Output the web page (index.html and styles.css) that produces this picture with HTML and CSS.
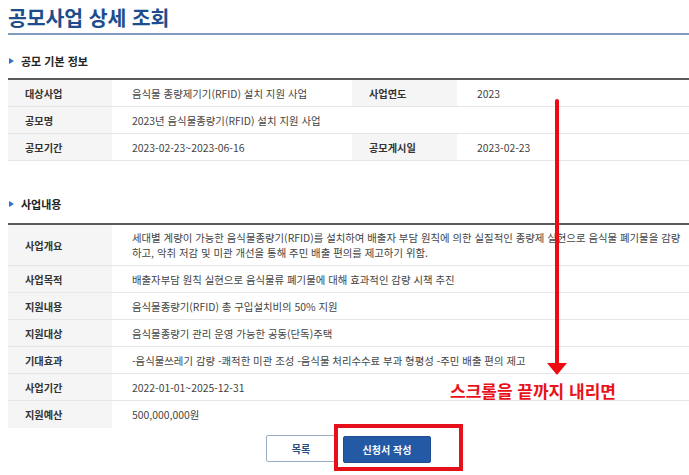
FILE: index.html
```html
<!DOCTYPE html>
<html lang="ko">
<head>
<meta charset="utf-8">
<title>공모사업 상세 조회</title>
<link rel="stylesheet" href="styles.css">
</head>
<body>
<div class="page">
  <h1 class="title">공모사업 상세 조회</h1>

  <h2 class="section-head"><span class="marker"></span>공모 기본 정보</h2>
  <table class="info">
    <colgroup>
      <col class="c-label"><col class="c-val1"><col class="c-label2"><col>
    </colgroup>
    <tr><th>대상사업</th><td>음식물 종량제기기(RFID) 설치 지원 사업</td><th>사업연도</th><td>2023</td></tr>
    <tr><th>공모명</th><td colspan="3">2023년 음식물종량기(RFID) 설치 지원 사업</td></tr>
    <tr><th>공모기간</th><td>2023-02-23~2023-06-16</td><th>공모게시일</th><td>2023-02-23</td></tr>
  </table>

  <h2 class="section-head second"><span class="marker"></span>사업내용</h2>
  <table class="info">
    <colgroup><col class="c-label"><col></colgroup>
    <tr class="tall"><th>사업개요</th><td>세대별 계량이 가능한 음식물종량기(RFID)를 설치하여 배출자 부담 원칙에 의한 실질적인 종량제 실현으로 음식물 폐기물을 감량<br>하고, 악취 저감 및 미관 개선을 통해 주민 배출 편의를 제고하기 위함.</td></tr>
    <tr><th>사업목적</th><td>배출자부담 원칙 실현으로 음식물류 폐기물에 대해 효과적인 감량 시책 추진</td></tr>
    <tr><th>지원내용</th><td>음식물종량기(RFID) 총 구입설치비의 50% 지원</td></tr>
    <tr><th>지원대상</th><td>음식물종량기 관리 운영 가능한 공동(단독)주택</td></tr>
    <tr><th>기대효과</th><td>-음식물쓰레기 감량 -쾌적한 미관 조성 -음식물 처리수수료 부과 형평성 -주민 배출 편의 제고</td></tr>
    <tr><th>사업기간</th><td>2022-01-01~2025-12-31</td></tr>
    <tr class="last"><th>지원예산</th><td>500,000,000원</td></tr>
  </table>

  <div class="actions">
    <button class="btn btn-list" type="button">목록</button>
    <span class="apply-wrap">
      <button class="btn btn-apply" type="button">신청서 작성</button>
      <span class="red-box"></span>
    </span>
  </div>

  <div class="arrow"><span class="arrow-line"></span><span class="arrow-head"></span></div>
  <div class="note">스크롤을 끝까지 내리면</div>
</div>
</body>
</html>
```

FILE: styles.css
```css
html, body {
  margin: 0;
  padding: 0;
  background: #ffffff;
}
body {
  font-family: "Noto Sans CJK KR", "Noto Sans", sans-serif;
  color: #333333;
  width: 689px;
  height: 475px;
  overflow: hidden;
}
.page {
  position: relative;
  padding-left: 8px;
  height: 475px;
}
.title {
  margin: 0;
  padding-top: 3px;
  height: 30px;
  font-size: 20.5px;
  line-height: 29px;
  font-weight: 700;
  color: #1d4d8c;
  letter-spacing: -0.1px;
  border-bottom: 2px solid #7f9bc2;
}
.section-head {
  display: flex;
  align-items: center;
  margin: 18px 0 9px 0;
  height: 16px;
  font-size: 11px;
  line-height: 16px;
  font-weight: 700;
  color: #222222;
}
.section-head.second {
  margin-top: 35px;
  margin-bottom: 11px;
}
.marker {
  width: 0;
  height: 0;
  border-top: 3.5px solid transparent;
  border-bottom: 3.5px solid transparent;
  border-left: 5px solid #2f73c8;
  margin: 0 7px 0 1px;
}
.info {
  width: 681px;
  border-collapse: collapse;
  border-top: 2px solid #5a5a5a;
  table-layout: fixed;
  font-size: 10.4px;
}
.c-label { width: 104px; }
.c-val1 { width: 240px; }
.c-label2 { width: 105px; }
.info tr { height: 27px; }
.info th,
.info td {
  border-bottom: 1px solid #e6e6e6;
  padding: 0;
  height: 26px;
  line-height: 15px;
  vertical-align: middle;
  text-align: left;
}
.info th {
  background: #f5f5f5;
  font-weight: 700;
  font-size: 10.2px;
  color: #333333;
  padding-left: 17px;
}
.info td {
  color: #444444;
  padding-left: 20px;
  white-space: nowrap;
}
.info tr.tall th,
.info tr.tall td {
  height: 40px;
}
.info tr.last th,
.info tr.last td {
  border-bottom: none;
}
.actions {
  display: flex;
  justify-content: center;
  gap: 7px;
  margin-top: 7px;
}
.btn {
  font-family: "Noto Sans CJK KR", "Noto Sans", sans-serif;
  font-size: 10px;
  font-weight: 700;
  height: 27px;
  border-radius: 2px;
  padding: 0;
  cursor: pointer;
}
.btn-list {
  width: 70px;
  background: #ffffff;
  color: #2b4d7e;
  border: 1px solid #9aadc8;
}
.apply-wrap {
  position: relative;
  display: block;
}
.btn-apply {
  width: 88px;
  height: 27px;
  background: #2459a5;
  color: #ffffff;
  border: 1px solid #1e4d91;
}
.red-box {
  position: absolute;
  left: -9px;
  top: -11px;
  width: 121px;
  height: 39px;
  border: 4px solid #e5101a;
}
.arrow {
  position: absolute;
  left: 547px;
  top: 99px;
  width: 20px;
  height: 277px;
}
.arrow-line {
  position: absolute;
  left: 8px;
  top: 0;
  width: 4px;
  height: 266px;
  background: #ee0a12;
  border-radius: 2px 2px 0 0;
}
.arrow-head {
  position: absolute;
  left: 0;
  top: 264px;
  width: 0;
  height: 0;
  border-left: 10px solid transparent;
  border-right: 10px solid transparent;
  border-top: 12px solid #ee0a12;
}
.note {
  position: absolute;
  left: 450px;
  top: 379px;
  font-size: 17px;
  line-height: 24px;
  font-weight: 700;
  color: #e8121b;
  white-space: nowrap;
}
```
